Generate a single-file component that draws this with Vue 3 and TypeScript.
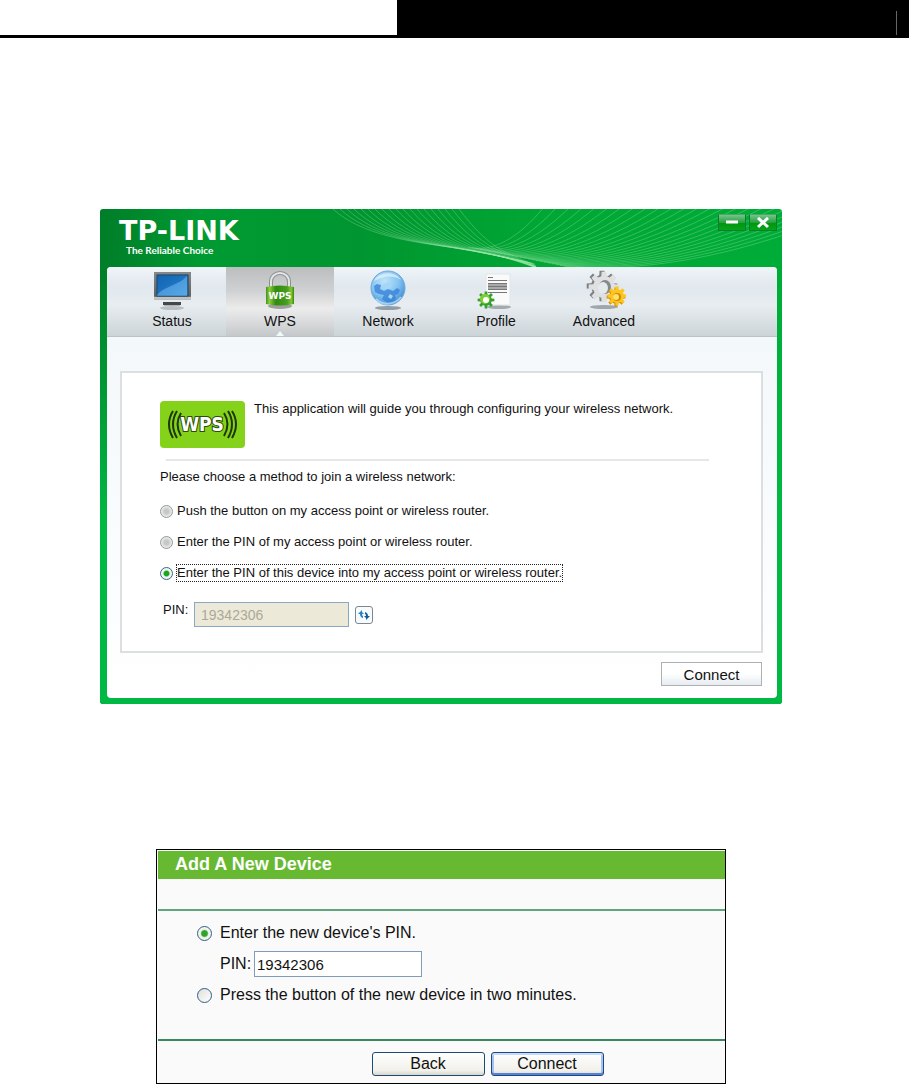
<script setup lang="ts">
import { ref } from 'vue'

type Tab = 'Status' | 'WPS' | 'Network' | 'Profile' | 'Advanced'

const tabs: Tab[] = ['Status', 'WPS', 'Network', 'Profile', 'Advanced']
const activeTab = ref<Tab>('WPS')

const methods: { id: string; label: string }[] = [
  { id: 'push', label: 'Push the button on my access point or wireless router.' },
  { id: 'ap-pin', label: 'Enter the PIN of my access point or wireless router.' },
  { id: 'device-pin', label: 'Enter the PIN of this device into my access point or wireless router.' },
]
const method = ref('device-pin')
const pin = ref('19342306')
const addMode = ref('pin')
const routerPin = ref('19342306')

const fallingWaves: string[] = Array.from({ length: 19 }, (_, i) => {
  const top = 233 + i * 7
  return `M${top} 0C${top + 28} ${26 + i * 0.6} ${312 + i * 5} ${33 + i * 0.5} ${350 + i * 4} ${38 + i * 0.7}S${412 + i} 50 437 59`
})
const risingWaves: string[] = Array.from({ length: 25 }, (_, i) => {
  const end = 444 + i * 13
  return `M${368 + i * 4} ${38 + i * 0.8}C${392 + i * 6} ${44 + i * 0.8} ${418 + i * 9} ${30 + i * 0.9} ${end} -2`
})

function gear(cx: number, cy: number, outer: number, inner: number, teeth: number): string {
  const points: string[] = []
  const step = (Math.PI * 2) / teeth
  for (let i = 0; i < teeth; i++) {
    const a = i * step
    const corners: [number, number][] = [
      [inner, -0.32],
      [outer, -0.2],
      [outer, 0.2],
      [inner, 0.32],
    ]
    for (const [r, o] of corners) {
      const t = a + o * step
      points.push(`${(cx + r * Math.cos(t)).toFixed(2)} ${(cy + r * Math.sin(t)).toFixed(2)}`)
    }
  }
  return `M${points.join('L')}Z`
}
const bigGear = gear(20, 17, 15.5, 11, 8)
const goldGear = gear(34, 28, 9.5, 6.8, 8)
const greenGear = gear(12, 31, 8.5, 5.8, 8)
</script>

<template>
  <div class="page">
    <header class="page-head">
      <div class="head-blank"></div>
      <div class="head-bar"><span class="head-tick"></span></div>
    </header>

    <main class="content">
      <section class="utility" aria-label="TP-LINK wireless utility">
        <div class="title-bar">
          <svg class="waves" viewBox="0 0 682 58" preserveAspectRatio="xMaxYMin slice" aria-hidden="true">
            <g fill="none" stroke="#9be6aa" stroke-width="0.8">
              <path v-for="d in fallingWaves" :key="d" :d="d" opacity="0.42" />
              <path v-for="d in risingWaves" :key="d" :d="d" opacity="0.42" />
            </g>
          </svg>
          <div class="brand">
            <span class="brand-name">TP-LINK</span>
            <span class="brand-tag">The Reliable Choice</span>
          </div>
          <div class="win-buttons">
            <button type="button" aria-label="Minimize">
              <svg width="14" height="12" viewBox="0 0 14 12"><path d="M1 5H13" stroke="#fff" stroke-width="3" /></svg>
            </button>
            <button type="button" aria-label="Close">
              <svg width="14" height="12" viewBox="0 0 14 12"><path d="M2 1L12 10M12 1L2 10" stroke="#fff" stroke-width="3" /></svg>
            </button>
          </div>
        </div>

        <div class="body">
          <nav class="tabs">
            <button
              v-for="tab in tabs"
              :key="tab"
              type="button"
              class="tab"
              :class="{ active: tab === activeTab }"
              @click="activeTab = tab"
            >
              <svg v-if="tab === 'Status'" class="icon" viewBox="0 0 44 44" aria-hidden="true">
                <defs>
                  <linearGradient id="screen" x1="0" y1="0" x2="1" y2="1">
                    <stop offset="0" stop-color="#1768b4" /><stop offset="1" stop-color="#3d9be4" />
                  </linearGradient>
                  <linearGradient id="frame" x1="0" y1="0" x2="0" y2="1">
                    <stop offset="0" stop-color="#85888b" /><stop offset="0.85" stop-color="#606366" /><stop offset="1" stop-color="#c4c8ca" />
                  </linearGradient>
                </defs>
                <ellipse cx="22" cy="39" rx="12" ry="2" fill="#9da4a8" opacity="0.6" />
                <rect x="4" y="3" width="37" height="28" fill="url(#frame)" />
                <rect x="4" y="28" width="37" height="2" fill="#bfc3c6" />
                <rect x="7" y="6" width="31" height="21" fill="url(#screen)" stroke="#1f3e5c" />
                <path d="M7 26C14 17 30 16 37 7V6H7Z" fill="#0b5fae" opacity="0.4" />
                <path d="M7 26C14 17 30 16 37 7V27H7Z" fill="#7cc0f2" opacity="0.4" />
                <rect x="13" y="33" width="18" height="3" fill="#44484b" />
                <rect x="14" y="36" width="16" height="1" fill="#b0b4b7" />
              </svg>
              <svg v-else-if="tab === 'WPS'" class="icon" viewBox="0 0 44 44" aria-hidden="true">
                <defs>
                  <linearGradient id="lock" x1="0" y1="0" x2="1" y2="0">
                    <stop offset="0" stop-color="#3c9414" /><stop offset="0.12" stop-color="#8cce3a" /><stop offset="0.35" stop-color="#2f8a10" /><stop offset="0.75" stop-color="#479f1c" /><stop offset="0.9" stop-color="#83c637" /><stop offset="1" stop-color="#348b12" />
                  </linearGradient>
                </defs>
                <ellipse cx="22" cy="37" rx="12" ry="3" fill="#777" opacity="0.65" />
                <path d="M13 18V13C13 1 31 1 31 13V18" fill="none" stroke="#8d9192" stroke-width="4" />
                <path d="M13 18V13C13 1 31 1 31 13V18" fill="none" stroke="#e4e6e6" stroke-width="2" />
                <path d="M8 18Q22 15 36 18V35Q22 38 8 35Z" fill="url(#lock)" />
                <text x="22" y="30" class="lock-text" text-anchor="middle">WPS</text>
              </svg>
              <svg v-else-if="tab === 'Network'" class="icon" viewBox="0 0 44 44" aria-hidden="true">
                <defs>
                  <radialGradient id="globe" cx="0.4" cy="0.3" r="0.7">
                    <stop offset="0" stop-color="#bfe4fb" /><stop offset="0.6" stop-color="#83c3f0" /><stop offset="1" stop-color="#4790d6" />
                  </radialGradient>
                </defs>
                <ellipse cx="22" cy="39" rx="13" ry="2" fill="#707c86" opacity="0.7" />
                <circle cx="22" cy="19" r="17" fill="url(#globe)" stroke="#6ba8de" />
                <path d="M8 17L11 15L15 16L14 20L18 22L22 20L27 22L31 19L34 21L32 25L29 26L30 30L26 34L20 33L16 30L18 26L13 25L9 23Z" fill="#3a83d8" opacity="0.8" />
                <path d="M17 15L23 13L26 17L23 20L19 20ZM24 25L27 27L25 30L22 28Z" fill="#a4d6f7" />
                <path d="M8 12C12 3 29 1 35 11C25 5 17 8 8 12Z" fill="#f0faff" opacity="0.6" />
                <path d="M10 30C17 37 29 36 35 28" fill="none" stroke="#d5f4ff" stroke-width="2" opacity="0.6" />
              </svg>
              <svg v-else-if="tab === 'Profile'" class="icon" viewBox="0 0 44 44" aria-hidden="true">
                <ellipse cx="25" cy="38" rx="12" ry="2" fill="#777f83" opacity="0.6" />
                <rect x="12" y="5" width="24" height="31" fill="#fafafa" stroke="#e2e5e7" />
                <rect x="14" y="15" width="19" height="5" fill="#aaa" />
                <path d="M14 8.500H19M14 11.500H33M14 14.500H33M14 17.500H33M14 20.500H33M14 23.500H33" stroke="#777" stroke-width="1" />
                <path :d="greenGear" fill="#35a02d" />
                <circle cx="11" cy="30" r="5" fill="#80ce35" />
                <circle cx="12" cy="31" r="3" fill="#fff" />
              </svg>
              <svg v-else class="icon" viewBox="0 0 44 44" aria-hidden="true">
                <ellipse cx="22" cy="38" rx="14" ry="2" fill="#727a7e" opacity="0.6" />
                <path :d="bigGear" fill="#7f8183" />
                <path :d="bigGear" fill="#dfe0e1" transform="translate(2 1)" />
                <ellipse cx="23" cy="18" rx="6" ry="7" fill="#85898c" />
                <ellipse cx="21" cy="19" rx="5" ry="6" fill="#e4e9ec" />
                <path :d="goldGear" fill="#d89300" />
                <path :d="goldGear" fill="#fdc51e" transform="translate(1 -1)" />
                <circle cx="35" cy="28" r="4" fill="#cf8b00" />
                <circle cx="34" cy="28" r="3" fill="#ffe06a" />
              </svg>
              <span>{{ tab }}</span>
            </button>
          </nav>

          <div class="panel">
            <div class="intro">
              <svg class="wps-logo" width="85" height="48" viewBox="0 0 85 48" role="img" aria-label="WPS">
                <rect width="85" height="47" rx="4" fill="#84d31a" />
                <g fill="none" stroke="#1f3608" stroke-width="2">
                  <path d="M13 10Q5 23 13 37M17 10Q9 23 17 37M21 12Q14 23 21 35" />
                  <path d="M72 10Q80 23 72 37M68 10Q76 23 68 37M64 12Q71 23 64 35" />
                </g>
                <text x="42" y="30" text-anchor="middle" class="wps-text">WPS</text>
              </svg>
              <p>This application will guide you through configuring your wireless network.</p>
            </div>
            <hr />
            <p class="prompt">Please choose a method to join a wireless network:</p>
            <div class="methods">
              <label v-for="m in methods" :key="m.id" class="method">
                <input v-model="method" type="radio" name="method" :value="m.id" />
                <span :class="{ focused: m.id === method }">{{ m.label }}</span>
              </label>
            </div>
            <div class="pin-row">
              <label for="device-pin">PIN:</label>
              <input id="device-pin" v-model="pin" type="text" disabled />
              <button type="button" class="refresh" aria-label="Generate a new PIN">
                <svg width="14" height="14" viewBox="0 0 14 14" aria-hidden="true">
                  <path d="M5 2L1 6H3Q3 9 6 10V8Q5 8 5 6H7L5 4Z" fill="#2583c8" />
                  <path d="M9 12L13 8H11Q11 5 8 4V6Q9 6 9 8H7L9 10Z" fill="#145b9e" />
                </svg>
              </button>
            </div>
          </div>

          <div class="actions">
            <button type="button" class="connect">Connect</button>
          </div>
        </div>
      </section>

      <section class="dialog">
        <h2>Add A New Device</h2>
        <div class="spacer"></div>
        <form class="choices" @submit.prevent>
          <label class="choice">
            <input v-model="addMode" type="radio" name="add" value="pin" />
            <span>Enter the new device's PIN.</span>
          </label>
          <div class="choice-pin">
            <label for="router-pin">PIN:</label>
            <input id="router-pin" v-model="routerPin" type="text" />
          </div>
          <label class="choice">
            <input v-model="addMode" type="radio" name="add" value="button" />
            <span>Press the button of the new device in two minutes.</span>
          </label>
        </form>
        <footer>
          <button type="button">Back</button>
          <button type="button" class="primary">Connect</button>
        </footer>
      </section>
    </main>
  </div>
</template>

<style>
body {
  margin: 0;
  background: #fff;
}
</style>

<style scoped>
* {
  box-sizing: border-box;
}
.page {
  font-family: "Liberation Sans", Arial, sans-serif;
  color: #111;
}
button,
input {
  font-family: inherit;
  color: inherit;
  margin: 0;
  padding: 0;
}
p,
h2 {
  margin: 0;
}
.page-head {
  display: flex;
  height: 38px;
  border-bottom: 3px solid #000;
}
.head-blank {
  flex: 397;
}
.head-bar {
  flex: 512;
  display: flex;
  justify-content: flex-end;
  background: #000;
}
.head-tick {
  width: 1px;
  margin: 11px 12px 0 0;
  background: #666;
}
.content {
  padding: 171px 127px 0 100px;
}

.utility {
  padding: 0 5px 6px 7px;
  border-radius: 3px;
  background: linear-gradient(90deg, #007d28 0, #009a32 100px, #009530 260px, #00a734 440px, #00ac38 100%);
  position: relative;
}
.utility::after {
  content: "";
  position: absolute;
  inset: 58px 0 0 0;
  border-radius: 3px;
  background: linear-gradient(180deg, transparent, #00b944 60%);
}
.title-bar {
  display: flex;
  justify-content: space-between;
  align-items: flex-start;
  height: 58px;
  padding: 5px 0 0 12px;
}
.waves {
  position: absolute;
  top: 0;
  left: 0;
  width: 100%;
  height: 58px;
}
.brand {
  position: relative;
  display: flex;
  flex-direction: column;
  color: #fff;
  padding-top: 3px;
}
.brand-name {
  font: bold 27px/27px "DejaVu Sans", sans-serif;
}
.brand-tag {
  padding-left: 7px;
  font: bold 10px/12px Lato, sans-serif;
}
.win-buttons {
  position: relative;
  display: flex;
  gap: 3px;
}
.win-buttons button {
  display: flex;
  align-items: center;
  justify-content: center;
  width: 28px;
  height: 17px;
  border: 1px solid #087f2a;
  border-top-color: #4aa867;
  background: linear-gradient(#77c48a, #25a13f 50%, #009611 55%, #06a519);
}
.body {
  position: relative;
  z-index: 1;
  border-radius: 4px;
  background: linear-gradient(#f3f8fa 70px, #f5f9fc 120px, #fcfdfe 350px, #fff);
  padding-bottom: 12px;
  overflow: hidden;
}
.tabs {
  display: flex;
  height: 70px;
  padding-left: 11px;
  border-bottom: 1px solid #bcc3c6;
  background: linear-gradient(#eff5f8, #e1e8ee 28%, #e7edf0 55%, #cdd4d8);
}
.tab {
  position: relative;
  display: flex;
  flex-direction: column;
  align-items: center;
  flex: 0 1 108px;
  padding-top: 2px;
  border: 0;
  background: none;
  font-size: 14px;
  line-height: 16px;
}
.tab.active {
  background: linear-gradient(#bcbdbe, #d0d1d2 35%, #ececed 60%, #c5c8ca);
}
.tab.active::after {
  content: "";
  position: absolute;
  bottom: 0;
  border: 4px solid transparent;
  border-top: 0;
  border-bottom: 5px solid #f3f8fa;
}
.icon {
  width: 44px;
  height: 44px;
}
.lock-text {
  font: bold 9px "DejaVu Sans", sans-serif;
  fill: #fff;
}
.panel {
  margin: 34px 14px 0 13px;
  padding: 28px 38px 24px;
  border: 2px solid #dcdfe0;
  background: #fff;
  font-size: 13px;
  line-height: 16px;
}
.intro {
  display: flex;
  gap: 9px;
}
.wps-logo {
  flex: none;
}
.wps-text {
  font: bold 19px "Liberation Sans Narrow", "DejaVu Sans Condensed", sans-serif;
  fill: #fff;
  stroke: #294a0b;
  stroke-width: 2px;
  paint-order: stroke;
}
hr {
  margin: 10px 14px 8px 6px;
  border: 0;
  border-top: 2px solid #e4e6e7;
}
.methods {
  display: flex;
  flex-direction: column;
  align-items: flex-start;
  gap: 13px;
  margin-top: 17px;
}
.method {
  display: flex;
  align-items: center;
  gap: 3px;
}
.method span {
  border: 1px solid transparent;
}
.method .focused {
  border: 1px dotted #222;
}
input[type="radio"] {
  appearance: none;
  flex: none;
  width: 13px;
  height: 13px;
  border: 1px solid #939698;
  border-radius: 50%;
  background: radial-gradient(circle, #c4c6c7 25%, #eee 70%);
}
input[type="radio"]:checked {
  border-color: #3c648b;
  background: radial-gradient(circle, #1ba51b 30%, #e9f1e9 45%, #fff);
}
.pin-row {
  display: flex;
  margin: 20px 0 0 3px;
}
.pin-row label {
  width: 31px;
  white-space: nowrap;
}
.pin-row input {
  width: 155px;
  height: 25px;
  padding: 0 6px;
  border: 1px solid #89a8c4;
  background: #ece9d8;
  color: #aca899;
  font-size: 14px;
}
.refresh {
  display: flex;
  align-items: center;
  justify-content: center;
  width: 18px;
  height: 18px;
  margin: 4px 0 0 6px;
  border: 1px solid #7d8790;
  border-radius: 3px;
  background: #f8fbfd;
}
.actions {
  display: flex;
  justify-content: flex-end;
  padding: 9px 15px 0 0;
}
.connect {
  width: 101px;
  height: 24px;
  border: 1px solid #aeb0b3;
  background: linear-gradient(#fff 50%, #e5ebf0);
  font-size: 15px;
}

.dialog {
  margin: 145px 56px 0;
  padding: 1px 0 0 1px;
  border: 1px solid #000;
  background: #fafafa;
}
.dialog h2 {
  height: 28px;
  padding-left: 17px;
  background: #67b932;
  color: #fff;
  font-size: 18px;
  line-height: 27px;
}
.spacer {
  height: 32px;
  border-bottom: 2px solid #5fa57d;
}
.choices {
  display: flex;
  flex-direction: column;
  gap: 8px;
  padding: 12px 0 34px 39px;
  font-size: 16px;
  line-height: 20px;
}
.choice {
  display: flex;
  align-items: center;
  gap: 8px;
}
.choice input[type="radio"] {
  width: 15px;
  height: 15px;
  border-color: #305e85;
  background: linear-gradient(135deg, #dfdfd9, #fff);
}
.choice input[type="radio"]:checked {
  background: radial-gradient(circle, #2ba62b 30%, #f0f0ea 45%, #fff);
}
.choice-pin {
  display: flex;
  align-items: center;
  gap: 2px;
  padding-left: 23px;
}
.choice-pin label {
  width: 32px;
  white-space: nowrap;
}
.choice-pin input {
  width: 168px;
  height: 26px;
  padding: 0 2px;
  border: 1px solid #7f9db9;
  background: #fff;
  font-size: 15px;
}
footer {
  display: flex;
  justify-content: center;
  gap: 6px;
  padding: 11px 0 7px 92px;
  border-top: 2px solid #388a5c;
}
footer button {
  width: 113px;
  height: 24px;
  border: 1px solid #1d4b79;
  border-radius: 3px;
  background: linear-gradient(#fff, #f1f0ea 80%, #d9d4c7);
  font-size: 16px;
}
footer .primary {
  box-shadow: inset 0 2px #c6dafb, inset 0 -2px #5a80d8, inset 2px 0 #a6c1f4, inset -2px 0 #a6c1f4;
}
</style>
